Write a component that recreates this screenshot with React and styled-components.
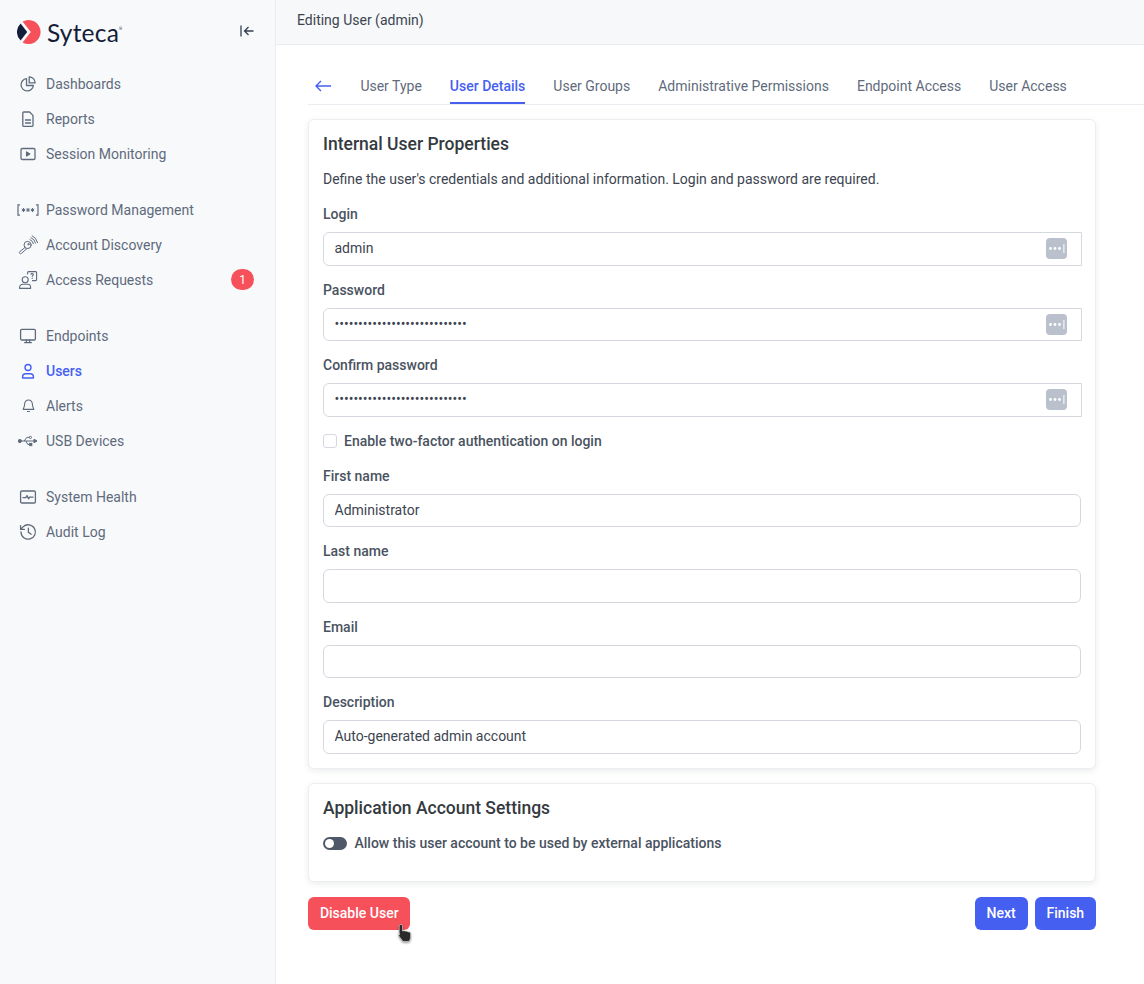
import React from 'react'
import styled, { createGlobalStyle } from 'styled-components'

const GlobalStyle = createGlobalStyle`
  html, body {
    margin: 0;
    padding: 0;
    background: #fff;
  }
  body {
    font-family: Roboto, "Liberation Sans", sans-serif;
    font-size: 14px;
    color: #343a40;
  }
  * {
    box-sizing: border-box;
  }
`

const Shell = styled.div`
  display: flex;
  width: 1144px;
  height: 984px;
  overflow: hidden;
`

const Sidebar = styled.aside`
  width: 276px;
  flex: none;
  background: #f8f9fb;
  border-right: 1px solid #e9ecf0;
`

const Brand = styled.div`
  display: flex;
  align-items: center;
  height: 66px;
  padding: 0 21px 2px 17px;
`

const BrandName = styled.span`
  font-family: Lato, sans-serif;
  font-size: 24.5px;
  font-weight: 400;
  letter-spacing: 0.2px;
  color: #141d38;
  margin-left: 6px;
`

const BrandMark = styled.sup`
  font-size: 4px;
  color: #141d38;
  align-self: flex-start;
  margin: 26px 0 0 0;
`

const Collapse = styled.button`
  margin-left: auto;
  padding: 0 0 2px;
  border: 0;
  background: none;
  display: flex;
  color: #343f52;
`

const NavGroup = styled.nav`
  margin-bottom: 21px;
`

const NavItem = styled.a`
  display: flex;
  align-items: center;
  height: 35px;
  padding: 0 21px 0 17px;
  color: ${p => (p.$active ? '#4560f1' : '#5f6b7c')};
  font-weight: ${p => (p.$active ? 500 : 400)};
  font-size: 14px;
`

const NavIcon = styled.span`
  width: 22px;
  height: 22px;
  flex: none;
  margin-right: 7px;
  display: flex;
  align-items: center;
  justify-content: center;
`

const Badge = styled.span`
  margin-left: auto;
  width: 23px;
  height: 21px;
  border-radius: 11px;
  background: #f6505a;
  color: #fff;
  font-size: 12px;
  display: flex;
  align-items: center;
  justify-content: center;
`

const Main = styled.main`
  flex: 1;
  min-width: 0;
`

const TopBar = styled.header`
  height: 45px;
  padding: 0 21px 5px;
  display: flex;
  align-items: center;
  background: #f6f8fa;
  border-bottom: 1px solid #e9ecf0;
  color: #3d4450;
  font-size: 14px;
`

const Content = styled.div`
  padding: 22px 48px 0 32px;
`

const Tabs = styled.div`
  display: flex;
  align-items: flex-end;
  height: 38px;
  margin-right: -48px;
  border-bottom: 1px solid #e9ecf0;
  padding-left: 7.4px;
`

const Back = styled.span`
  height: 37px;
  width: 45px;
  flex: none;
  display: flex;
  align-items: center;
  color: #4560f1;
`

const Tab = styled.a`
  height: 38px;
  margin-right: 28px;
  padding-top: 10px;
  color: ${p => (p.$active ? '#4560f1' : '#5f6b7c')};
  font-weight: ${p => (p.$active ? 500 : 400)};
  border-bottom: 2px solid ${p => (p.$active ? '#4560f1' : 'transparent')};
  line-height: 21px;
`

const Card = styled.section`
  background: #fff;
  border: 1px solid #eceef1;
  border-radius: 6px;
  box-shadow: 0 2px 6px rgba(40, 50, 70, 0.09);
  padding: 12px 14px 14px;
  margin-top: 14px;
  height: ${p => (p.$height ? `${p.$height}px` : 'auto')};
`

const CardTitle = styled.h2`
  margin: 0 0 13px;
  font-size: 17.5px;
  line-height: 24px;
  font-weight: 500;
  color: #343a40;
`

const Intro = styled.p`
  margin: 0 0 14px;
  line-height: 21px;
  color: #3d4450;
`

const Field = styled.div`
  margin-bottom: ${p => (p.$last ? 0 : 14)}px;
`

const Label = styled.label`
  display: block;
  line-height: 21px;
  margin-bottom: 7px;
  font-weight: 500;
  color: #4a5361;
`

const InputGroup = styled.div`
  position: relative;
`

const TextInput = styled.input`
  display: block;
  width: ${p => (p.$group ? 'calc(100% + 1px)' : '100%')};
  height: 33.5px;
  padding: 0 10.5px 1px;
  border: 1px solid #d5d9df;
  border-radius: ${p => (p.$group ? '6px 0 0 6px' : '6px')};
  background: #fff;
  color: #3d4450;
  font: 400 14px Roboto, sans-serif;
  outline: none;
`

const DotsButton = styled.span`
  position: absolute;
  right: 14px;
  top: 6px;
  width: 21px;
  height: 21px;
  border-radius: 4px;
  background: #bac0cc;
  display: flex;
  align-items: center;
  justify-content: center;
`

const CheckRow = styled.label`
  display: flex;
  align-items: center;
  height: 21px;
  margin-bottom: 14px;
  font-weight: 500;
  color: #4a5361;
`

const Box = styled.span`
  width: 14px;
  height: 14px;
  border: 1px solid #d5d9df;
  border-radius: 3px;
  background: #fff;
  margin-right: 7px;
`

const Toggle = styled.span`
  position: relative;
  width: 24px;
  height: 13px;
  border-radius: 7px;
  background: #4f5868;
  margin-right: 7.5px;
  &::after {
    content: '';
    position: absolute;
    left: 2px;
    top: 2px;
    width: 9px;
    height: 9px;
    border-radius: 50%;
    background: #fff;
  }
`

const Actions = styled.div`
  display: flex;
  gap: 7px;
  margin-top: 15px;
`

const Button = styled.button`
  position: relative;
  height: 33px;
  padding: 0 11.9px;
  border: 0;
  border-radius: 6px;
  background: ${p => (p.$danger ? '#f6505a' : '#4560f1')};
  color: #fff;
  font: 500 14px Roboto, sans-serif;
  margin-right: ${p => (p.$push ? 'auto' : 0)};
`

const Pointer = styled.svg`
  position: absolute;
  left: 89px;
  top: 26px;
  filter: drop-shadow(0 1px 1px rgba(0, 0, 0, 0.45));
`

const Ico = ({ children, w = 18, h = 18, box = '0 0 18 18', sw = 1.3 }) => (
  <svg
    width={w}
    height={h}
    viewBox={box}
    fill="none"
    stroke="#5f6b7c"
    strokeWidth={sw}
    strokeLinecap="round"
    strokeLinejoin="round"
  >
    {children}
  </svg>
)

const icons = {
  dashboards: (
    <Ico>
      <path d="M7.5 3.6a6.2 6.2 0 1 0 6.9 6.9H7.5z" />
      <path d="M10.2 1.9v6h5.9a5.9 5.9 0 0 0-5.9-6z" />
    </Ico>
  ),
  reports: (
    <Ico>
      <path d="M4.8 2h5.8l3.4 3.4v10a1 1 0 0 1-1 1H4.8a1 1 0 0 1-1-1V3a1 1 0 0 1 1-1z" />
      <path d="M6.5 10h5M6.5 13h5" />
    </Ico>
  ),
  session: (
    <Ico>
      <rect x="2" y="3.5" width="14" height="11" rx="1.2" />
      <path d="M7.6 7l3.2 2-3.2 2z" fill="#5f6b7c" />
    </Ico>
  ),
  password: (
    <svg width="22" height="12" viewBox="0 0 22 12" fill="none" stroke="#5f6b7c" strokeWidth="1.2">
      <path d="M3 .8H1v10.4h2M19 .8h2v10.4h-2" />
      <path
        d="M6.5 4v4M4.8 7l3.4-2M4.8 5l3.4 2M11 4v4M9.3 7l3.4-2M9.3 5l3.4 2M15.5 4v4M13.8 7l3.4-2M13.8 5l3.4 2"
        strokeWidth="1"
      />
    </svg>
  ),
  discovery: (
    <Ico w={20} h={20} box="0 0 20 20" sw={1}>
      <circle cx="9.6" cy="10" r="3.6" />
      <path d="M7 12.5 1.8 16.6a1.2 1.2 0 0 0 1.6 1.8L9 13.5" />
      <circle cx="10.4" cy="9.2" r=".7" />
      <path d="M12 4.6a5.6 5.6 0 0 1 3.4 4.2M13 2.6a8 8 0 0 1 4.6 5.6M14.2.8a10 10 0 0 1 5.4 6.8" />
    </Ico>
  ),
  requests: (
    <Ico w={20} h={20} box="0 0 20 20" sw={1.1}>
      <circle cx="7.2" cy="9.8" r="3" />
      <path d="M1.6 18.4v-1.2c0-1.8 1.6-2.9 3.2-2.9h4.6c1.7 0 3.2 1.1 3.2 2.9v1.2z" />
      <path d="M9.6 4V2.6c0-.6.4-1 1-1h7c.6 0 1 .4 1 1v7c0 .6-.4 1-1 1H14.4" />
      <path d="M12.9 4.3c.2-1 2.4-1 2.5.3 0 1-1.2 1-1.2 2" />
      <path d="M14.2 8.4v.1" />
    </Ico>
  ),
  endpoints: (
    <Ico>
      <rect x="1.6" y="2.4" width="14.8" height="10.6" rx="1.2" />
      <path d="M7.4 13v2.6M10.6 13v2.6M5.6 15.6h6.8" />
    </Ico>
  ),
  users: (
    <Ico>
      <circle cx="9" cy="5.5" r="3" stroke="#4560f1" strokeWidth="1.4" />
      <path d="M3.6 16v-1.2c0-1.8 1.4-3 3.2-3h4.4c1.8 0 3.2 1.2 3.2 3V16z" stroke="#4560f1" strokeWidth="1.4" />
    </Ico>
  ),
  alerts: (
    <Ico w={15} h={15}>
      <path d="M9 2.4a4.6 4.6 0 0 0-4.6 4.6c0 4-1.6 5.4-1.8 6.6h12.8c-.2-1.2-1.8-2.6-1.8-6.6A4.6 4.6 0 0 0 9 2.4z" />
      <path d="M7.8 16.2h2.4" />
    </Ico>
  ),
  usb: (
    <svg width="20" height="12" viewBox="0 0 20 12" fill="none" stroke="#5f6b7c" strokeWidth="1">
      <circle cx="1.8" cy="6" r="1.6" fill="#5f6b7c" />
      <path d="M2 6h14M6.2 6l2.6-3.6h2.4M7.8 6l2 3.4h1.8" />
      <path d="M16 4.2l3 1.8-3 1.8z" fill="#5f6b7c" />
      <circle cx="12.4" cy="2.4" r="1.1" />
      <rect x="11.6" y="8.4" width="2.2" height="2.2" fill="#5f6b7c" />
    </svg>
  ),
  health: (
    <Ico>
      <rect x="1.6" y="3" width="14.8" height="12" rx="1.2" />
      <path d="M4 9.6h2.8l1.2-2 1.6 3.2 1-1.6H14" />
    </Ico>
  ),
  audit: (
    <Ico>
      <path d="M2 9a7.2 7.2 0 1 0 2.1-5.1L1.8 6.2" />
      <path d="M1.6 2.6v3.8h3.8M9.4 5.2v4.2l2.8 1.8" />
    </Ico>
  ),
}

const navGroups = [
  [
    { label: 'Dashboards', icon: 'dashboards' },
    { label: 'Reports', icon: 'reports' },
    { label: 'Session Monitoring', icon: 'session' },
  ],
  [
    { label: 'Password Management', icon: 'password' },
    { label: 'Account Discovery', icon: 'discovery' },
    { label: 'Access Requests', icon: 'requests', badge: 1 },
  ],
  [
    { label: 'Endpoints', icon: 'endpoints' },
    { label: 'Users', icon: 'users', active: true },
    { label: 'Alerts', icon: 'alerts' },
    { label: 'USB Devices', icon: 'usb' },
  ],
  [
    { label: 'System Health', icon: 'health' },
    { label: 'Audit Log', icon: 'audit' },
  ],
]

const tabs = [
  'User Type',
  'User Details',
  'User Groups',
  'Administrative Permissions',
  'Endpoint Access',
  'User Access',
]

const Logo = () => (
  <svg width="24" height="24" viewBox="0 0 24 24">
    <path d="M3.6 3.4 10.2 12l-6.6 8.6A12 12 0 0 1 3.6 3.4z" fill="#141d38" />
    <path d="M5.6 1.6A12 12 0 1 1 5.6 22.4L13.8 12z" fill="#f6505a" />
  </svg>
)

const Dots = () => (
  <svg width="17" height="11" viewBox="0 0 17 11" fill="#fff">
    <circle cx="2.5" cy="5.5" r="1.4" />
    <circle cx="7" cy="5.5" r="1.4" />
    <circle cx="11.5" cy="5.5" r="1.4" />
    <rect x="15.4" y="1" width="1" height="9" />
  </svg>
)

const keepValue = () => {}

const TextField = ({ label, value = '', last }) => (
  <Field $last={last}>
    <Label>{label}</Label>
    <TextInput value={value} onChange={keepValue} />
  </Field>
)

const SecretField = ({ label, value, type = 'password' }) => (
  <Field>
    <Label>{label}</Label>
    <InputGroup>
      <TextInput $group type={type} value={value} onChange={keepValue} />
      <DotsButton>
        <Dots />
      </DotsButton>
    </InputGroup>
  </Field>
)

const App = () => (
  <Shell>
    <GlobalStyle />
    <Sidebar>
      <Brand>
        <Logo />
        <BrandName>Syteca</BrandName>
        <BrandMark>®</BrandMark>
        <Collapse aria-label="Collapse">
          <svg width="14" height="12" viewBox="0 0 14 12" fill="none" stroke="currentColor" strokeWidth="1.3">
            <path d="M1 .5v11M13.5 6H4.5M8.5 2l-4 4 4 4" />
          </svg>
        </Collapse>
      </Brand>
      {navGroups.map((group, i) => (
        <NavGroup key={i}>
          {group.map(item => (
            <NavItem key={item.label} $active={item.active}>
              <NavIcon>{icons[item.icon]}</NavIcon>
              {item.label}
              {item.badge && <Badge>{item.badge}</Badge>}
            </NavItem>
          ))}
        </NavGroup>
      ))}
    </Sidebar>
    <Main>
      <TopBar>Editing User (admin)</TopBar>
      <Content>
        <Tabs>
          <Back>
            <svg width="16" height="12" viewBox="0 0 16 12" fill="none" stroke="currentColor" strokeWidth="1.4">
              <path d="M16 6H1M6 1 1 6l5 5" />
            </svg>
          </Back>
          {tabs.map(tab => (
            <Tab key={tab} $active={tab === 'User Details'}>
              {tab}
            </Tab>
          ))}
        </Tabs>
        <Card>
          <CardTitle>Internal User Properties</CardTitle>
          <Intro>Define the user's credentials and additional information. Login and password are required.</Intro>
          <SecretField label="Login" value="admin" type="text" />
          <SecretField label="Password" value="passwordpasswordpassword1234" />
          <SecretField label="Confirm password" value="passwordpasswordpassword1234" />
          <CheckRow>
            <Box />
            Enable two-factor authentication on login
          </CheckRow>
          <TextField label="First name" value="Administrator" />
          <TextField label="Last name" />
          <TextField label="Email" />
          <TextField label="Description" value="Auto-generated admin account" last />
        </Card>
        <Card $height={99}>
          <CardTitle>Application Account Settings</CardTitle>
          <CheckRow>
            <Toggle />
            Allow this user account to be used by external applications
          </CheckRow>
        </Card>
        <Actions>
          <Button $danger $push>
            Disable User
            <Pointer width="17" height="21" viewBox="0 0 16 20">
              <path
                d="M3.6 1.4c.9 0 1.6.7 1.6 1.6v4.6l1.2-.2c.6-.1 1.1.1 1.4.4.6-.3 1.3-.2 1.7.3.6-.2 1.3 0 1.6.5 1-.2 1.8.4 1.8 1.3v3.4c0 2-1 3-1.4 4.3H5.6L1.8 12.6c-.8-1-.2-2.2 1-1.9l-.8.1V3c0-.9.7-1.6 1.6-1.6z"
                fill="#2b2b2b"
                stroke="#fff"
                strokeWidth=".5"
              />
            </Pointer>
          </Button>
          <Button>Next</Button>
          <Button>Finish</Button>
        </Actions>
      </Content>
    </Main>
  </Shell>
)

export default App
